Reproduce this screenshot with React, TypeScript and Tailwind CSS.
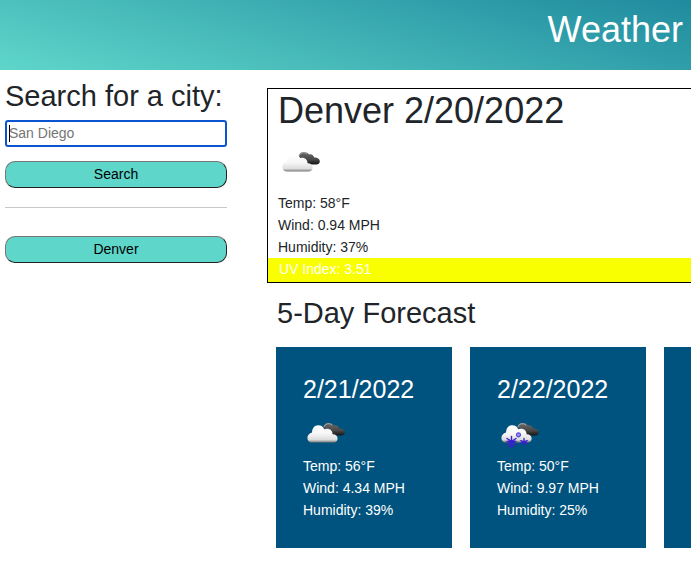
import { useId } from "react";

function WeatherIcon({ snow = false, label }: { snow?: boolean; label: string }) {
  const id = useId();
  const light = `${id}-light`;
  const dark = `${id}-dark`;
  return (
    <svg role="img" aria-label={label} viewBox="0 0 45 45" className="block size-[45px]">
      <defs>
        <linearGradient id={light} x1="0" y1="0" x2="0" y2="1">
          <stop offset="0" stopColor="#ffffff" />
          <stop offset="0.5" stopColor="#f6f6f6" />
          <stop offset="0.84" stopColor="#dcdcdc" />
          <stop offset="1" stopColor="#777777" />
        </linearGradient>
        <linearGradient id={dark} x1="0" y1="0" x2="0" y2="1">
          <stop offset="0" stopColor="#6a6a6a" />
          <stop offset="0.6" stopColor="#484848" />
          <stop offset="1" stopColor="#151515" />
        </linearGradient>
      </defs>
      <path
        d="M21 17.5C21 14.8 23 13.2 26 13.2C28.6 13.2 30 14 31 15.4C33.5 14.6 35.6 16 36.2 18.6C39 18.4 41.8 20 41.8 22.2C41.8 24.4 40.4 25.4 38 25.4H28Z"
        fill={`url(#${dark})`}
      />
      <path d="M21 17C21.6 14.8 23.6 13.6 25.6 13.6C27.2 13.6 28.4 14.2 29 15.2" fill="none" stroke="#999" strokeWidth="1.2" />
      <path
        d="M9 32.5C6 32.5 4.4 30.6 4.4 28C4.4 25.2 6.4 23 9 22.5C9.2 18 11.6 15.2 15.2 15.2C18.2 15.2 20.2 16.8 21.2 19.2C25.5 17.6 29.6 19.8 29.6 24.2C32.8 24.2 34.6 26 34.6 28.4C34.6 31 33 32.5 30.4 32.5Z"
        fill={`url(#${light})`}
      />
      {snow && (
        <g fill="none" stroke="#3a1fd0" strokeLinecap="round">
          <path strokeWidth="1.4" d="M14.5 26.5V37.5M10 28.5L19 34.5M19 28.5L10 34.5M10 31.5H19M12.5 36.5L14.5 34L16.5 36.5" />
          <circle cx="21.5" cy="24.8" r="2" fill="#9a94ee" stroke="#5549dc" strokeWidth="1.2" strokeDasharray="1.4 0.7" />
          <path strokeWidth="1.3" d="M27 28.5V35.5M23.8 30.6L30.2 33.4M30.2 30.6L23.8 33.4" />
        </g>
      )}
    </svg>
  );
}

const days = [
  { date: "2/21/2022", temp: "56°F", wind: "4.34 MPH", humidity: "39%", snow: false },
  { date: "2/22/2022", temp: "50°F", wind: "9.97 MPH", humidity: "25%", snow: true },
];

const buttonClass =
  "block h-[27px] w-full rounded-[10px] border border-t-[#767676] border-l-[#767676] border-r-[#212121] border-b-[#212121] bg-[#5fd6ca] pb-[2px] text-center text-sm leading-none text-black";

export default function App() {
  return (
    <div className="min-h-screen overflow-hidden bg-white font-['Liberation_Sans',Arial,sans-serif] text-sm text-[#212529]">
      <header className="flex h-[70px] justify-end bg-[linear-gradient(15deg,#5fd6ca,#1f8a9e)] px-2 pt-2">
        <h1 className="text-4xl leading-[43px] text-white">Weather</h1>
      </header>

      <div className="flex">
        <aside className="w-[227px] shrink-0 pt-2 pl-[5px]">
          <form onSubmit={(e) => e.preventDefault()}>
            <label htmlFor="city" className="block text-[29px] leading-9 whitespace-nowrap">
              Search for a city:
            </label>
            <div className="relative mt-[6px]">
              <input
                id="city"
                type="text"
                placeholder="San Diego"
                className="block h-[27px] w-full rounded-[3px] border-2 border-[#0b55d0] px-[2px] pb-[2px] text-sm text-black outline-none placeholder:text-[#757575]"
              />
              <span aria-hidden="true" className="absolute inset-y-[5px] left-1 w-px bg-black" />
            </div>
            <button type="submit" className={`mt-[14px] ${buttonClass}`}>
              Search
            </button>
          </form>
          <hr className="my-[19px] border-t border-[#c8c9ca]" />
          <div className="pt-[9px]">
            <button type="button" className={buttonClass}>
              Denver
            </button>
          </div>
        </aside>

        <main className="ml-10 min-w-0 flex-1 pt-[18px]">
          <section className="border-y border-l border-black">
            <div className="pl-[10px]">
              <h2 className="text-4xl leading-[43px]">Denver 2/20/2022</h2>
              <div className="pt-[7px] pb-2">
                <WeatherIcon label="Broken clouds" />
              </div>
              <p className="leading-[22px]">Temp: 58°F</p>
              <p className="leading-[22px]">Wind: 0.94 MPH</p>
              <p className="leading-[22px]">Humidity: 37%</p>
            </div>
            <p className="h-6 bg-[#f9ff00] pl-[11px] leading-[22px] text-white">UV Index: 3.51</p>
          </section>

          <h2 className="mt-3 pl-[10px] text-[29px] leading-9">5-Day Forecast</h2>

          <div className="mt-4 ml-[9px] grid grid-cols-[176px_176px_minmax(0,1fr)] gap-[18px]">
            {days.map((day) => (
              <article key={day.date} className="bg-[#00537e] px-[27px] py-[27px] text-white">
                <h3 className="text-[25px] leading-[30px]">{day.date}</h3>
                <div className="pt-[6px]">
                  <WeatherIcon snow={day.snow} label={day.snow ? "Snow" : "Broken clouds"} />
                </div>
                <p className="leading-[22px]">Temp: {day.temp}</p>
                <p className="leading-[22px]">Wind: {day.wind}</p>
                <p className="leading-[22px]">Humidity: {day.humidity}</p>
              </article>
            ))}
            <div className="bg-[#00537e]" />
          </div>
        </main>
      </div>
    </div>
  );
}
